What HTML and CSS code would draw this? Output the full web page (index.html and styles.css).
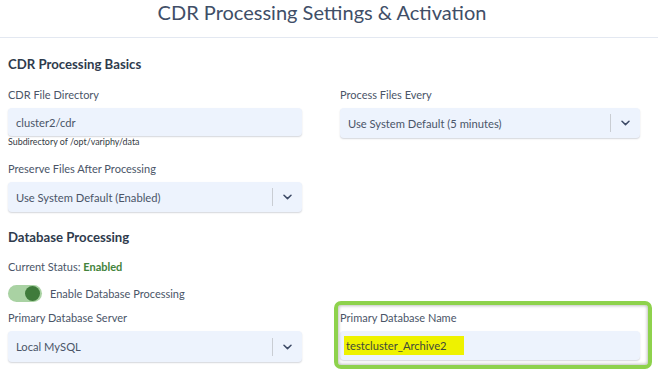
FILE: index.html
```html
<!DOCTYPE html>
<html lang="en">
<head>
<meta charset="utf-8">
<title>CDR Processing Settings &amp; Activation</title>
<link rel="stylesheet" href="styles.css">
</head>
<body>
<header class="page-header">
  <h1 class="page-title">CDR Processing Settings &amp; Activation</h1>
</header>
<main class="content">
  <h2 class="section-title first">CDR Processing Basics</h2>
  <div class="grid">
    <div class="field">
      <label class="label">CDR File Directory</label>
      <div class="input">cluster2/cdr</div>
      <div class="help">Subdirectory of /opt/variphy/data</div>
    </div>
    <div class="field">
      <label class="label">Process Files Every</label>
      <div class="select">
        <span class="select-value">Use System Default (5 minutes)</span>
        <span class="select-sep"></span>
        <span class="select-arrow"><svg width="9" height="6" viewBox="0 0 9 6"><path d="M1 1.2 L4.5 4.6 L8 1.2" fill="none" stroke="#3d4a66" stroke-width="1.5" stroke-linecap="round" stroke-linejoin="round"/></svg></span>
      </div>
    </div>
  </div>
  <div class="grid row2">
    <div class="field">
      <label class="label">Preserve Files After Processing</label>
      <div class="select">
        <span class="select-value">Use System Default (Enabled)</span>
        <span class="select-sep"></span>
        <span class="select-arrow"><svg width="9" height="6" viewBox="0 0 9 6"><path d="M1 1.2 L4.5 4.6 L8 1.2" fill="none" stroke="#3d4a66" stroke-width="1.5" stroke-linecap="round" stroke-linejoin="round"/></svg></span>
      </div>
    </div>
  </div>
  <h2 class="section-title second">Database Processing</h2>
  <div class="status">Current Status: <strong class="enabled">Enabled</strong></div>
  <div class="toggle-row">
    <span class="toggle"><span class="knob"></span></span>
    <span class="toggle-label">Enable Database Processing</span>
  </div>
  <div class="grid row3">
    <div class="field">
      <label class="label">Primary Database Server</label>
      <div class="select tall">
        <span class="select-value">Local MySQL</span>
        <span class="select-sep"></span>
        <span class="select-arrow"><svg width="9" height="6" viewBox="0 0 9 6"><path d="M1 1.2 L4.5 4.6 L8 1.2" fill="none" stroke="#3d4a66" stroke-width="1.5" stroke-linecap="round" stroke-linejoin="round"/></svg></span>
      </div>
    </div>
    <div class="field annotated">
      <label class="label">Primary Database Name</label>
      <div class="input name-input"><mark class="hl">testcluster_Archive2</mark></div>
    </div>
  </div>
</main>
</body>
</html>
```

FILE: styles.css
```css
* { box-sizing: border-box; }
html, body { margin: 0; padding: 0; background: #ffffff; }
body {
  font-family: Lato, "Open Sans", Arial, sans-serif;
  color: #4a5568;
  min-height: 371px;
}
.page-header {
  height: 38px;
  border-bottom: 1px solid #e3e8f1;
  display: flex;
  justify-content: center;
}
.page-title {
  margin: 0;
  font-size: 20px;
  font-weight: 400;
  line-height: 24px;
  color: #404e67;
  position: relative;
  left: -7px;
}
.content { padding: 0 8px 10px; }
.section-title {
  margin: 0;
  font-size: 13.2px;
  font-weight: 700;
  line-height: 18px;
  color: #2f3b4d;
}
.section-title.first { margin-top: 17px; }
.section-title.second { margin-top: 16px; }
.grid {
  display: grid;
  grid-template-columns: 294px 300px;
  column-gap: 38px;
  margin-top: 14px;
}
.grid.row2 { margin-top: 14px; }
.grid.row3 { margin-top: 8px; }
.label {
  display: block;
  font-size: 11px;
  line-height: 16px;
  color: #4a5568;
}
.input, .select {
  margin-top: 5px;
  background: #edf3fd;
  border-radius: 4px;
  box-shadow: 0 1px 1.5px rgba(60, 70, 90, 0.22);
  font-size: 11.2px;
  color: #4a5568;
  display: flex;
  align-items: center;
}
.input { height: 28px; padding-left: 8px; }
.select { height: 30px; padding-left: 8px; }
.select.tall { height: 31px; }
.select-value { flex: 1; }
.select-sep {
  width: 1px;
  height: 18px;
  background: #c9cdd3;
}
.select-arrow {
  width: 29px;
  display: flex;
  justify-content: center;
  align-items: center;
}
.help {
  font-size: 8.9px;
  line-height: 11px;
  color: #333a44;
}
.status {
  margin-top: 13px;
  font-size: 11px;
  line-height: 16px;
}
.enabled { color: #43833c; font-weight: 700; }
.toggle-row {
  margin-top: 10px;
  display: flex;
  align-items: center;
  height: 17px;
}
.toggle {
  width: 34px;
  height: 17px;
  border-radius: 9px;
  background: #a9d2a3;
  position: relative;
  display: inline-block;
}
.knob {
  position: absolute;
  right: 2px;
  top: 1px;
  width: 15px;
  height: 15px;
  border-radius: 50%;
  background: #3f7b3b;
}
.toggle-label {
  margin-left: 8px;
  font-size: 11px;
  color: #4a5568;
}
.annotated { position: relative; }
.annotated::after {
  content: "";
  position: absolute;
  left: -6px;
  right: -12px;
  top: -9px;
  bottom: -7px;
  border: 4px solid #8ed24c;
  border-radius: 7px;
  box-shadow: inset 0 0 3px 1px rgba(80, 80, 80, 0.35);
  pointer-events: none;
}
.name-input { height: 29px; padding-left: 4px; }
.hl {
  background: #eef200;
  color: #3f4a3a;
  padding: 3px 17px 3px 2px;
  line-height: 13px;
}
```
